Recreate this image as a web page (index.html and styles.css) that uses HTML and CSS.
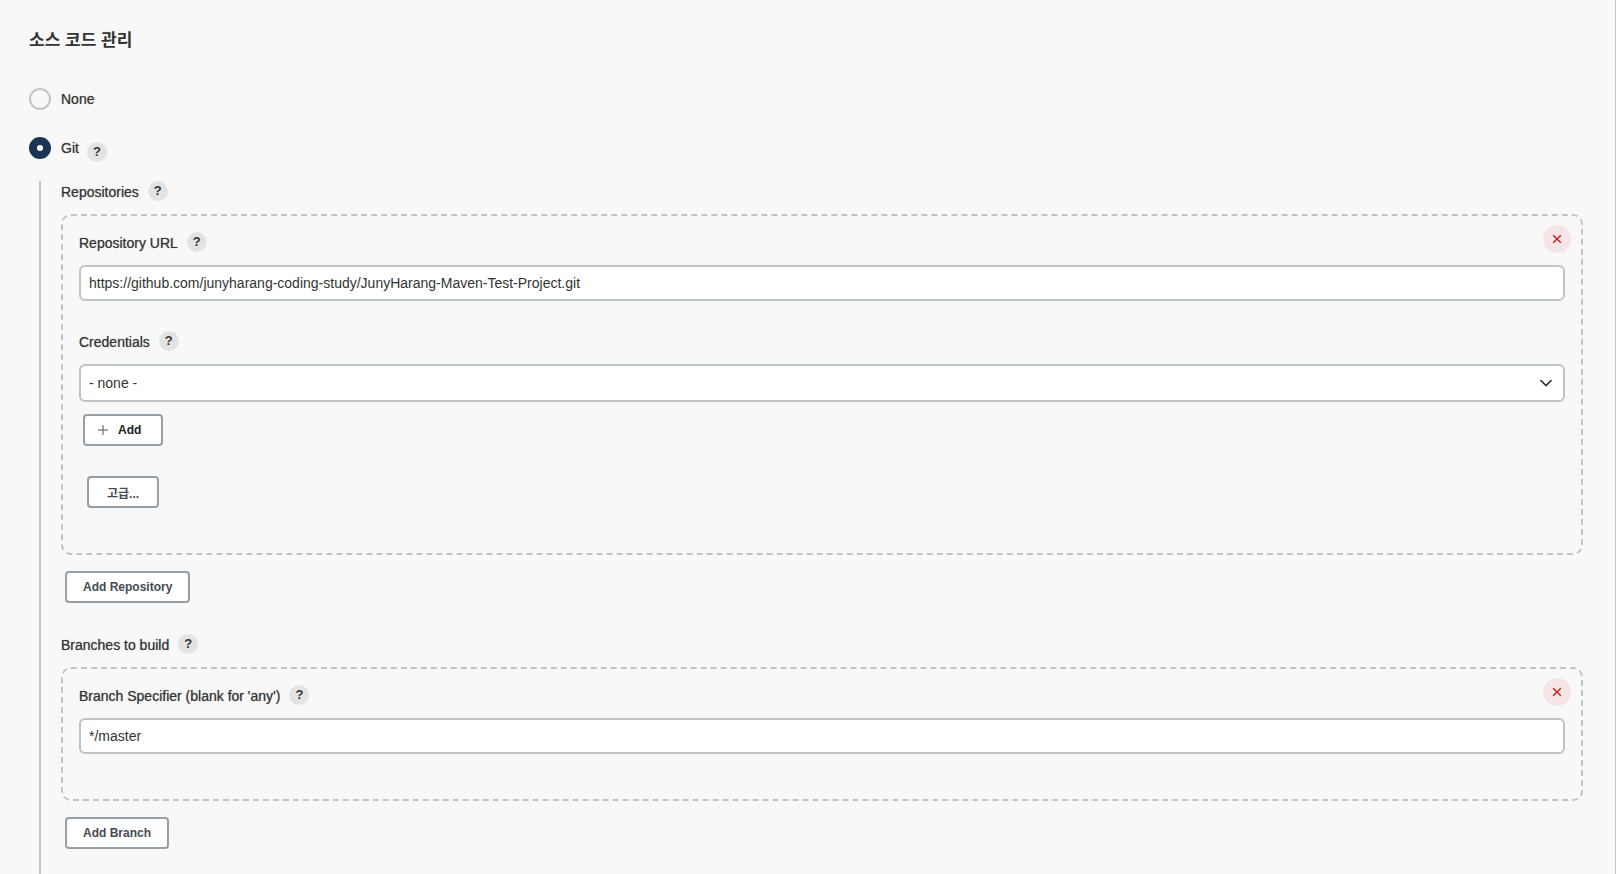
FILE: index.html
```
<!DOCTYPE html>
<html lang="ko">
<head>
    <meta charset="UTF-8">
    <meta name="viewport" content="width=device-width, initial-scale=1.0">
    <title>소스 코드 관리</title>
    <link rel="stylesheet" href="styles.css">
</head>
<body>
    <main class="config">
        <h1>소스 코드 관리</h1>

        <div class="radio-row">
            <input type="radio" name="scm" id="scmNone">
            <label for="scmNone">None</label>
        </div>

        <div class="radio-row">
            <input type="radio" name="scm" id="scmGit" checked>
            <label for="scmGit">Git</label>
            <button type="button" class="help help-low">?</button>
        </div>

        <div class="nested">
            <section>
                <div class="label-row">
                    <h2>Repositories</h2>
                    <button type="button" class="help">?</button>
                </div>
                <div class="repeated">
                    <button type="button" class="delete" aria-label="Delete">
                        <svg width="10" height="10" viewBox="0 0 10 10"><path d="M1.2 1.2l7.600 7.600M8.800 1.200l-7.600 7.600"/></svg>
                    </button>
                    <div class="label-row">
                        <label for="repoUrl">Repository URL</label>
                        <button type="button" class="help">?</button>
                    </div>
                    <input type="text" id="repoUrl" value="https://github.com/junyharang-coding-study/JunyHarang-Maven-Test-Project.git">

                    <div class="label-row next-field">
                        <label for="credentials">Credentials</label>
                        <button type="button" class="help">?</button>
                    </div>
                    <div class="select">
                        <select id="credentials">
                            <option>- none -</option>
                        </select>
                        <svg width="14" height="8" viewBox="0 0 14 8"><path d="M1.500 1.200L7 6.500l5.500-5.300"/></svg>
                    </div>
                    <button type="button" class="btn btn-add">
                        <svg width="10" height="10" viewBox="0 0 10 10"><path d="M5 0v10M0 5h10"/></svg>
                        Add
                    </button>
                    <button type="button" class="btn btn-advanced">고급...</button>
                </div>
                <button type="button" class="btn">Add Repository</button>
            </section>

            <section>
                <div class="label-row">
                    <h2>Branches to build</h2>
                    <button type="button" class="help">?</button>
                </div>
                <div class="repeated">
                    <button type="button" class="delete" aria-label="Delete">
                        <svg width="10" height="10" viewBox="0 0 10 10"><path d="M1.200 1.200l7.600 7.600M8.800 1.200l-7.600 7.600"/></svg>
                    </button>
                    <div class="label-row">
                        <label for="branch">Branch Specifier (blank for 'any')</label>
                        <button type="button" class="help">?</button>
                    </div>
                    <input type="text" id="branch" value="*/master">
                </div>
                <button type="button" class="btn">Add Branch</button>
            </section>
        </div>
    </main>
</body>
</html>
```

FILE: styles.css
```
* {
    box-sizing: border-box;
}
body {
    margin: 0;
    background-color: #f8f8f8;
    color: #333;
    font-family: "Liberation Sans", "Noto Sans CJK KR", sans-serif;
    font-size: 14px;
}
input, select, button {
    font-family: inherit;
    color: inherit;
    margin: 0;
}
svg {
    fill: none;
    stroke: currentColor;
}
.config {
    display: flex;
    flex-direction: column;
    min-height: 100vh;
    padding: 27px 32px 0 29px;
    border-right: 1px solid #bdc5cb;
}
h1 {
    margin: 0 0 34px;
    font-size: 17px;
    line-height: 27px;
    font-weight: bold;
}
h2 {
    margin: 0;
    font-size: 14px;
    font-weight: normal;
}
/* a little heavier than regular text */
h2, label {
    line-height: 22px;
    text-shadow: 0 0 1px #888;
}
.radio-row {
    display: flex;
    align-items: center;
    gap: 10px;
    height: 22px;
    margin-bottom: 27px;
}
.radio-row input {
    appearance: none;
    width: 22px;
    height: 22px;
    border: 2px solid #bfc7cd;
    border-radius: 50%;
}
.radio-row input:checked {
    border: 8px solid #1a3451;
    background-color: #fff;
}
.help {
    width: 20px;
    height: 20px;
    padding: 0;
    border: none;
    border-radius: 50%;
    background-color: #e3e3e3;
    font-size: 13px;
    font-weight: bold;
    line-height: 20px;
    cursor: pointer;
}
.help-low {
    margin: 8px 0 0 -2px;
}
/* guide line on the left of the Git options */
.nested {
    flex: 1;
    margin: -5px 0 0 10px;
    padding-left: 20px;
    border-left: 2px solid #bdc5cb;
}
section {
    margin-bottom: 31px;
}
section:last-child {
    margin-bottom: 0;
    padding-bottom: 25px;
}
.label-row {
    display: flex;
    align-items: flex-start;
    gap: 9px;
    height: 21px;
    margin-bottom: 12px;
}
.next-field {
    margin-top: 30px;
}
.repeated {
    position: relative;
    margin-bottom: 16px;
    padding: 16px 16px 45px;
    border: 2px dashed #bdc5cb;
    border-radius: 10px;
}
.delete {
    position: absolute;
    top: 9px;
    right: 10px;
    display: flex;
    align-items: center;
    justify-content: center;
    width: 28px;
    height: 28px;
    padding: 0;
    border: none;
    border-radius: 50%;
    background-color: #f5e6e5;
    color: #c4201d;
    cursor: pointer;
}
.delete svg {
    stroke-width: 1.4;
}
input[type="text"], select {
    display: block;
    width: 100%;
    height: 36px;
    padding: 0 8px;
    border: 2px solid #bdc5cb;
    border-radius: 6px;
    background-color: #fff;
    font-size: 14px;
}
.select {
    display: grid;
    align-items: center;
    margin-bottom: 12px;
}
.select select {
    grid-area: 1 / 1;
    appearance: none;
    height: 38px;
}
.select svg {
    grid-area: 1 / 1;
    justify-self: end;
    margin-right: 12px;
    stroke-width: 1.7;
    pointer-events: none;
}
.btn {
    display: block;
    height: 32px;
    margin-left: 4px;
    padding: 0 16px;
    border: 2px solid #949fa8;
    border-radius: 4px;
    background-color: #fff;
    color: #444b54;
    font-size: 12px;
    font-weight: bold;
    cursor: pointer;
}
.btn-add {
    display: flex;
    align-items: center;
    gap: 10px;
    margin-bottom: 30px;
    padding: 0 20px 0 13px;
    color: #222;
}
.btn-add svg {
    stroke: #555;
}
.btn-advanced {
    margin-left: 8px;
    padding: 0 18px;
}
```
